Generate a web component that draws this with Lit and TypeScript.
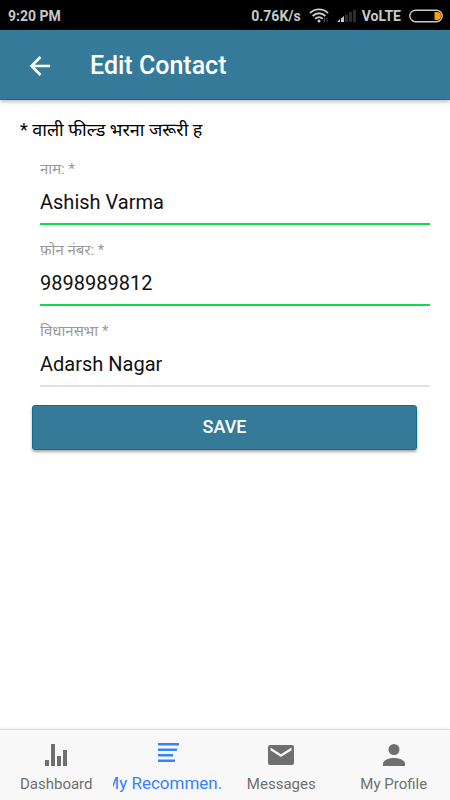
import { LitElement, html, css, svg } from "lit";
import { customElement, property } from "lit/decorators.js";
import { classMap } from "lit/directives/class-map.js";

@customElement("status-bar")
class StatusBar extends LitElement {
  static styles = css`
    :host {
      display: flex;
      align-items: center;
      justify-content: space-between;
      height: 30px;
      padding: 1px 7px 0 8px;
      box-sizing: border-box;
      background: #000;
      color: #c8c8c8;
      font-size: 14px;
      font-weight: 700;
    }
    .right {
      display: flex;
      align-items: center;
      gap: 8px;
    }
    .pair {
      display: flex;
      align-items: center;
      gap: 6px;
    }
    svg {
      display: block;
    }
  `;

  render() {
    return html`
      <span>9:20 PM</span>
      <div class="right">
        <span>0.76K/s</span>
        <svg width="20" height="16" viewBox="0 0 20 16" fill="none" stroke="#c8c8c8" stroke-width="1.8">
          <path d="M1 5.2C6 .2 14 .2 19 5.2" />
          <path d="M3.6 8C7.4 4.3 12.6 4.3 16.4 8" />
          <path d="M6.2 10.8C8.4 8.7 11.6 8.7 13.8 10.8" />
          <circle cx="10" cy="12.9" r="1.5" fill="#c8c8c8" stroke="none" />
          <path d="M15.5 9.5v4.5M14 12.3l1.5 1.7M18 14V9.5" stroke="#444" stroke-width="1" />
        </svg>
        <div class="pair">
          <svg width="19" height="14" viewBox="0 0 19 14">
            <path d="M0 13l3-3v3zM4 13V9.5l3-2.5v6z" fill="#c8c8c8" />
            <path d="M8 5.5h3V13H8zM12 3h3v10h-3zM16 1h3v12h-3z" fill="#2c2c2c" />
          </svg>
          <span>VoLTE</span>
        </div>
        <svg width="34" height="14" viewBox="0 0 34 14">
          <rect x=".8" y="1.3" width="32.4" height="11.4" rx="5.7" fill="none" stroke="#c8c8c8" stroke-width="1.4" />
          <path d="M25.500 3H28a4 4 0 0 1 0 8h-2.500z" fill="#fb9b1d" />
        </svg>
      </div>
    `;
  }
}

@customElement("contact-field")
class ContactField extends LitElement {
  @property() label = "";
  @property() value = "";
  @property() type = "text";
  @property({ type: Boolean }) valid = false;

  static styles = css`
    :host {
      display: block;
    }
    .field {
      height: 81px;
      box-sizing: border-box;
      padding-top: 14px;
      display: flex;
      flex-direction: column;
      border-bottom: 2px solid #e2e2e2;
    }
    .valid {
      border-bottom-color: #0fda52;
    }
    label {
      font-size: 15px;
      line-height: 22px;
      color: #999;
    }
    input {
      border: 0;
      padding: 0;
      margin: 0;
      outline: 0;
      width: 100%;
      height: 44px;
      background: none;
      color: #111;
      font: inherit;
      font-size: 20px;
    }
  `;

  render() {
    return html`
      <div class=${classMap({ field: true, valid: this.valid })}>
        <label for="input">${this.label}</label>
        <input id="input" type=${this.type} .value=${this.value} />
      </div>
    `;
  }
}

const tabs = [
  {
    label: "Dashboard",
    icon: svg`<path d="M3 18h4v6H3zM9 2h4v22H9zM15 14h4v10h-4zM21 8h4v16h-4z" />`,
  },
  {
    label: "My Recommen...",
    active: true,
    icon: svg`<path d="M4 4h21v2.5H4zM4 9.5h19V12H4zM4 15h15v2.5H4zM4 20.5h17V23H4z" />`,
  },
  {
    label: "Messages",
    icon: svg`<path fill-rule="evenodd" d="M3 3h22a2 2 0 0 1 2 2v16a2 2 0 0 1-2 2H3a2 2 0 0 1-2-2V5a2 2 0 0 1 2-2zM3.5 5.5v2.8L14 15l10.5-6.7V5.5L14 12.3z" />`,
  },
  {
    label: "My Profile",
    icon: svg`<circle cx="14" cy="7.500" r="5.500" /><path d="M3 24v-2.500c0-3.700 7-5.500 11-5.500s11 1.800 11 5.500V24z" />`,
  },
];

@customElement("app-root")
class AppRoot extends LitElement {
  static styles = css`
    :host {
      display: flex;
      flex-direction: column;
      min-height: 100vh;
      background: #fff;
      font-family: Roboto, "Noto Sans Devanagari", "Noto Sans", sans-serif;
    }
    header {
      display: flex;
      align-items: center;
      gap: 38px;
      height: 70px;
      padding: 2px 26px 0;
      box-sizing: border-box;
      background: #357b99;
      border-bottom: 1px solid #146c8c;
      box-shadow: 0 2px 4px rgba(0, 0, 0, 0.25);
      color: #fff;
    }
    .back {
      display: flex;
      padding: 0;
      border: 0;
      background: none;
      color: inherit;
    }
    h1 {
      margin: 0;
      font-size: 25px;
      line-height: 32px;
      font-weight: 500;
    }
    main {
      flex: 1;
      padding: 20px;
    }
    .note {
      margin: 0;
      font-size: 18px;
      line-height: 20px;
      color: #000;
    }
    .fields {
      padding: 4px 0 0 20px;
    }
    .save {
      display: block;
      width: calc(100% - 25px);
      height: 45px;
      margin: 18px 13px 0 12px;
      padding: 0 0 2px;
      border: 1px solid #146c8c;
      border-radius: 3px;
      background: #357b99;
      box-shadow: 0 2px 3px rgba(0, 0, 0, 0.35);
      color: #fff;
      font: inherit;
      font-size: 18px;
      font-weight: 500;
    }
    nav {
      display: grid;
      grid-template-columns: repeat(4, minmax(0, 1fr));
      height: 71px;
      box-sizing: border-box;
      border-top: 1px solid #dedede;
      box-shadow: 0 -1px 2px rgba(0, 0, 0, 0.06);
      background: #f8f8f8;
    }
    .tab {
      display: flex;
      flex-direction: column;
      align-items: center;
      gap: 6px;
      padding-top: 12px;
      color: #6f6f6f;
      font-size: 15px;
      line-height: 20px;
      text-decoration: none;
      white-space: nowrap;
    }
    .active {
      gap: 8px;
      padding: 9px 2px 0 0;
      color: #3880ff;
      font-size: 17px;
    }
    .tab svg {
      flex: none;
    }
    .label {
      display: flex;
      justify-content: center;
      max-width: 100%;
      overflow: hidden;
    }
  `;

  render() {
    return html`
      <status-bar></status-bar>
      <header>
        <button class="back" aria-label="Back">
          <svg width="26" height="26" viewBox="0 0 26 26" fill="none" stroke="currentColor" stroke-width="2.6">
            <path d="M24 13H6M14.5 4L5.5 13l9 9" />
          </svg>
        </button>
        <h1>Edit Contact</h1>
      </header>
      <main>
        <p class="note">* वाली फील्ड भरना जरूरी ह</p>
        <div class="fields">
          <contact-field label="नाम: *" value="Ashish Varma" valid></contact-field>
          <contact-field label="फ़ोन नंबर: *" value="9898989812" type="tel" valid></contact-field>
          <contact-field label="विधानसभा *" value="Adarsh Nagar"></contact-field>
        </div>
        <button class="save">SAVE</button>
      </main>
      <nav>
        ${tabs.map(
          (tab) => html`
            <a href="#" class=${classMap({ tab: true, active: !!tab.active })}>
              <svg width="28" height="26" viewBox="0 0 28 26" fill="currentColor">${tab.icon}</svg>
              <span class="label">${tab.label}</span>
            </a>
          `
        )}
      </nav>
    `;
  }
}
